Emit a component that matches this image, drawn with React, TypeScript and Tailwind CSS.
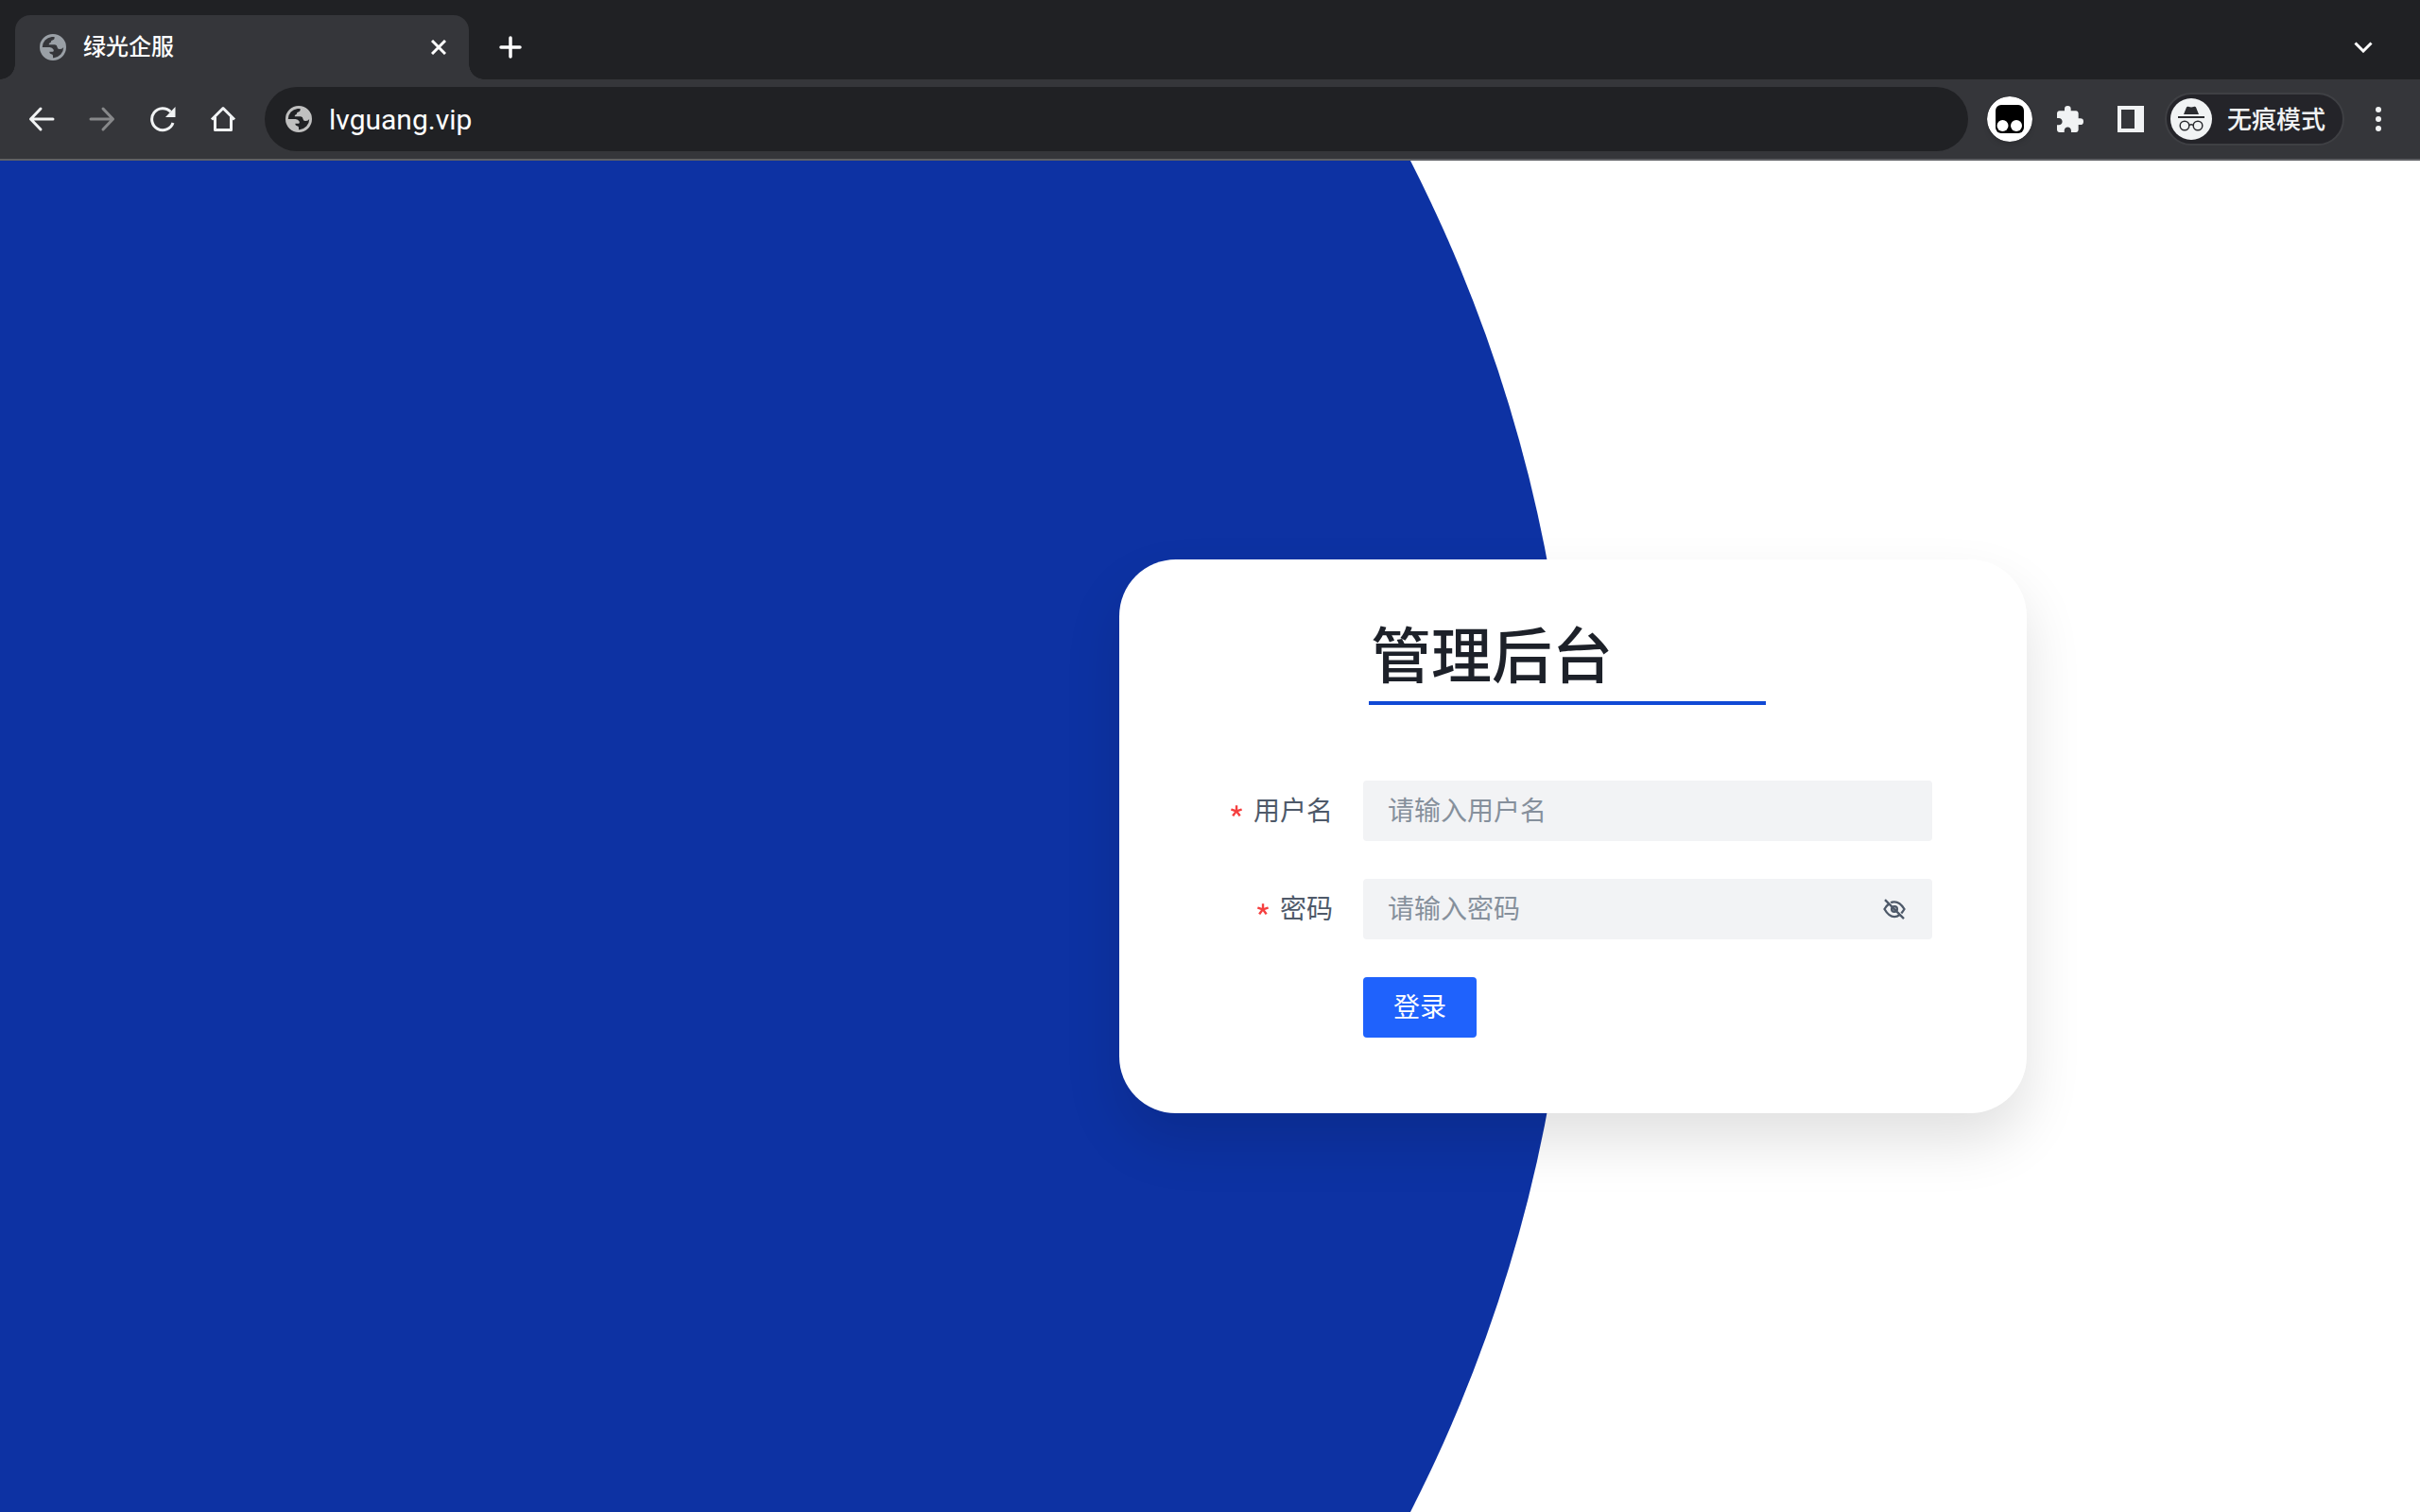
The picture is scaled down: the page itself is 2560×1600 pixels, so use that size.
import type { ReactNode } from "react";

const font = "font-[Roboto,'Noto_Sans_CJK_SC',sans-serif]";

function Globe({ className }: { className: string }) {
  return (
    <svg viewBox="0 0 28 28" className={className} fill="currentColor" aria-hidden="true">
      <path
        fillRule="evenodd"
        d="M14 0A14 14 0 1 1 14 28A14 14 0 1 1 14 0ZM2.800 14A11.200 11.200 0 0 1 12.800 2.900L15.600 2.900V4.600Q15.600 6.300 13.600 6.500Q12 6.600 12 8Q12 9.400 10.600 9.600Q9.600 9.800 9.800 11.200L16 11.200Q18.400 11.400 18.600 14Q18.700 16 21 16Q24 16.200 25.200 14A11.200 11.200 0 0 1 15 25.200L14 25.200V23Q14 21.400 12.200 21.200Q10.400 21 10.400 19.600V18.800L14 18.700Q15.400 18.300 14.600 16.600Q13.400 14.200 10.600 14Z"
      />
    </svg>
  );
}

function IconButton({ label, className = "", children }: { label: string; className?: string; children: ReactNode }) {
  return (
    <button type="button" aria-label={label} className={`flex size-16 shrink-0 items-center justify-center ${className}`}>
      {children}
    </button>
  );
}

function TabStrip() {
  return (
    <div className="flex h-[84px] items-end bg-[#202124] text-white">
      <div className="size-4 shrink-0 bg-[radial-gradient(circle_at_0_0,#202124_15.5px,#35363a_16px)]" />
      <div className="flex h-[68px] w-[480px] items-center rounded-t-2xl bg-[#35363a] pr-2 pl-[26px]">
        <Globe className="size-7 text-[#9aa0a6]" />
        <span className="ml-[18px] flex-1 text-2xl font-medium">绿光企服</span>
        <button type="button" aria-label="关闭标签页" className="flex size-12 items-center justify-center">
          <svg viewBox="0 0 16 16" className="size-4" fill="none" stroke="currentColor" strokeWidth="3">
            <path d="M1 1L15 15M15 1L1 15" />
          </svg>
        </button>
      </div>
      <div className="size-4 shrink-0 bg-[radial-gradient(circle_at_100%_0,#202124_15.5px,#35363a_16px)]" />
      <button type="button" aria-label="打开新的标签页" className="flex h-[68px] w-14 items-center justify-center">
        <svg viewBox="0 0 24 24" className="size-6" fill="none" stroke="currentColor" strokeWidth="3.5" strokeLinecap="round">
          <path d="M12 2V22M2 12H22" />
        </svg>
      </button>
      <button type="button" aria-label="搜索标签页" className="mr-7 ml-auto flex h-[68px] w-16 items-center justify-center">
        <svg viewBox="0 0 20 12" className="h-3 w-5" fill="none" stroke="currentColor" strokeWidth="3">
          <path d="M1.500 1.500L10 10L18.500 1.500" />
        </svg>
      </button>
    </div>
  );
}

function Toolbar() {
  return (
    <div className="flex h-[86px] items-center border-b-2 border-[#5f6064] bg-[#35363a] px-3 text-[#f1f3f4]">
      <IconButton label="后退">
        <svg viewBox="0 0 28 28" className="size-7" fill="none" stroke="currentColor" strokeWidth="3" strokeLinecap="round" strokeLinejoin="round">
          <path d="M26 14H2.500M13 3L2.500 14L13 25" />
        </svg>
      </IconButton>
      <IconButton label="前进" className="text-[#87888a]">
        <svg viewBox="0 0 28 28" className="size-7" fill="none" stroke="currentColor" strokeWidth="3" strokeLinecap="round" strokeLinejoin="round">
          <path d="M2 14H25.500M15 3L25.500 14L15 25" />
        </svg>
      </IconButton>
      <IconButton label="重新加载">
        <svg viewBox="0 0 28 28" className="size-7" fill="none" stroke="currentColor" strokeWidth="3">
          <path d="M25 18A11.500 11.500 0 1 1 22.500 6.300" />
          <path d="M27.500 1V12H17Z" fill="currentColor" stroke="none" />
        </svg>
      </IconButton>
      <IconButton label="主页">
        <svg viewBox="0 0 28 28" className="size-7" fill="none" stroke="currentColor" strokeWidth="3">
          <path d="M2 14.500L14 2.500L26 14.500M5.500 12V25.500H22.500V12" strokeLinejoin="round" />
        </svg>
      </IconButton>
      <div className="ml-3 flex h-[68px] flex-1 items-center rounded-full bg-[#202124] pl-[22px]">
        <Globe className="size-7 shrink-0 text-[#c0c0c0]" />
        <input
          type="text"
          aria-label="地址栏"
          defaultValue="lvguang.vip"
          className="ml-[18px] h-12 flex-1 bg-transparent text-[30px] text-white outline-none"
        />
      </div>
      <IconButton label="扩展程序图标" className="ml-3">
        <svg viewBox="0 0 48 48" className="size-12 rounded-full shadow-md">
          <circle cx="24" cy="24" r="24" fill="#fff" />
          <rect x="9" y="9" width="30" height="30" rx="6" fill="#000" />
          <circle cx="16.500" cy="31" r="6" fill="#fff" />
          <circle cx="31" cy="31" r="6" fill="#fff" />
        </svg>
      </IconButton>
      <IconButton label="扩展程序">
        <svg viewBox="2 1 21 21" className="size-7" fill="currentColor">
          <path d="M20.500 11H19V7c0-1.100-.9-2-2-2h-4V3.500a2.500 2.500 0 0 0-5 0V5H4c-1.100 0-1.990.9-1.990 2v3.800H3.500c1.490 0 2.700 1.210 2.700 2.700s-1.210 2.700-2.700 2.700H2V20c0 1.100.9 2 2 2h3.800v-1.500c0-1.490 1.210-2.700 2.700-2.700 1.490 0 2.700 1.210 2.700 2.700V22H17c1.100 0 2-.9 2-2v-4h1.500a2.500 2.500 0 0 0 0-5z" />
        </svg>
      </IconButton>
      <IconButton label="侧边栏">
        <svg viewBox="0 0 28 28" className="size-7" fill="currentColor">
          <path fillRule="evenodd" d="M0 0H28V28H0ZM4 4V24H18V4Z" />
        </svg>
      </IconButton>
      <button type="button" className="ml-1 flex h-14 w-[190px] shrink-0 items-center rounded-full border-2 border-[#3f4044] bg-[#242429] pl-1">
        <svg viewBox="0 0 44 44" className="size-11" fill="none">
          <circle cx="22" cy="22" r="22" fill="#f1f3f4" />
          <path d="M14 17L17 9.500C17.500 8.500 18.500 8.500 19.500 9L22 9.500L24.500 9C25.500 8.500 26.500 8.500 27 9.500L30 17Z" fill="#2b2c30" />
          <path d="M8 20H36" stroke="#2b2c30" strokeWidth="2" />
          <circle cx="15" cy="29" r="4.800" stroke="#2b2c30" strokeWidth="1.500" />
          <circle cx="29" cy="29" r="4.800" stroke="#2b2c30" strokeWidth="1.500" />
          <path d="M19.800 28.500Q22 27 24.200 28.500" stroke="#2b2c30" strokeWidth="1.500" />
        </svg>
        <span className="ml-4 pt-0.5 text-[26px] font-medium">无痕模式</span>
      </button>
      <button type="button" aria-label="更多" className="ml-1 flex size-16 shrink-0 items-center justify-center">
        <svg viewBox="0 0 6 26" className="h-[26px] w-1.5" fill="currentColor">
          <circle cx="3" cy="3" r="3" />
          <circle cx="3" cy="13" r="3" />
          <circle cx="3" cy="23" r="3" />
        </svg>
      </button>
    </div>
  );
}

function Field({ id, label, type, placeholder, children }: { id: string; label: string; type: string; placeholder: string; children?: ReactNode }) {
  return (
    <>
      <label htmlFor={id} className="flex items-center justify-end text-[28px] text-[#4e5969]">
        <svg viewBox="0 0 1024 1024" className="mr-3 size-3 text-[#f53f3f]" fill="currentColor" aria-hidden="true">
          <path d="M583.338667 17.066667c18.773333 0 34.133333 15.360000 34.133333 34.133333v349.013333l313.344-101.888a34.133333 34.133333 0 0 1 43.008 22.016l42.154667 129.706667a34.133333 34.133333 0 0 1-21.845334 43.178667l-315.733333 102.400 208.896 287.744a34.133333 34.133333 0 0 1-7.509333 47.786666l-110.421334 80.213334a34.133333 34.133333 0 0 1-47.786666-7.509334L505.685333 706.218667 288.426667 1005.226667a34.133333 34.133333 0 0 1-47.786667 7.509333l-110.421333-80.213333a34.133333 34.133333 0 0 1-7.509334-47.786667l214.186667-295.253333L29.013333 489.813333a34.133333 34.133333 0 0 1-22.016-43.008l42.154667-129.877333a34.133333 34.133333 0 0 1 43.008-22.016l320.512 104.106667L412.672 51.200c0-18.773333 15.360000-34.133333 34.133333-34.133333h136.533334z" />
        </svg>
        <span className="pt-0.5">{label}</span>
      </label>
      <div className="flex h-16 items-center rounded-sm bg-[#f2f3f5] px-[26px]">
        <input id={id} type={type} placeholder={placeholder} className="h-full min-w-0 flex-1 bg-transparent text-[28px] text-[#1d2129] outline-none placeholder:text-[#86909c]" />
        {children}
      </div>
    </>
  );
}

function LoginCard() {
  return (
    <section className="w-[960px] rounded-[60px] bg-white px-[100px] pt-[58px] pb-20 shadow-[0_30px_60px_rgba(0,0,0,0.12)]">
      <h1 className="ml-[164px] w-[420px] border-b-4 border-[#1049d5] pl-0.5 text-[64px] leading-[92px] font-medium text-[#1d2129]">管理后台</h1>
      <form className="mt-20 grid grid-cols-[126px_1fr] gap-x-8 gap-y-10" onSubmit={(e) => e.preventDefault()}>
        <Field id="username" label="用户名" type="text" placeholder="请输入用户名" />
        <Field id="password" label="密码" type="password" placeholder="请输入密码">
          <button type="button" aria-label="显示密码" className="text-[#4e5969]">
            <svg viewBox="0 0 48 48" className="size-7" fill="none" stroke="currentColor" strokeWidth="4">
              <path d="M14 14.500c-2.690 2-5.415 5.330-8 9.500 5.373 9.333 11.500 14 18 14 3.325 0 6.491-1.221 9.500-3.662M17.463 12.500C19 11 21.750 11 24 11c6.500 0 12.627 4.333 18 13-1.766 3.068-3.599 5.530-5.500 7.500" />
              <path d="M29 24a5 5 0 1 1-10 0 5 5 0 0 1 10 0ZM6.852 7.103l34.294 34.294" />
            </svg>
          </button>
        </Field>
        <button type="submit" className="col-start-2 h-16 w-[120px] rounded-sm bg-[#1f62fc] pt-0.5 text-[28px] text-white">
          登录
        </button>
      </form>
    </section>
  );
}

export default function App() {
  return (
    <div className={`flex min-h-screen flex-col bg-white ${font}`}>
      <header>
        <TabStrip />
        <Toolbar />
      </header>
      <main className="relative flex flex-1 items-center overflow-hidden pl-[46.25%]">
        <div className="absolute inset-0 bg-[#0d32a3] [clip-path:circle(1572px_at_92px_50%)]" />
        <div className="relative">
          <LoginCard />
        </div>
      </main>
    </div>
  );
}
